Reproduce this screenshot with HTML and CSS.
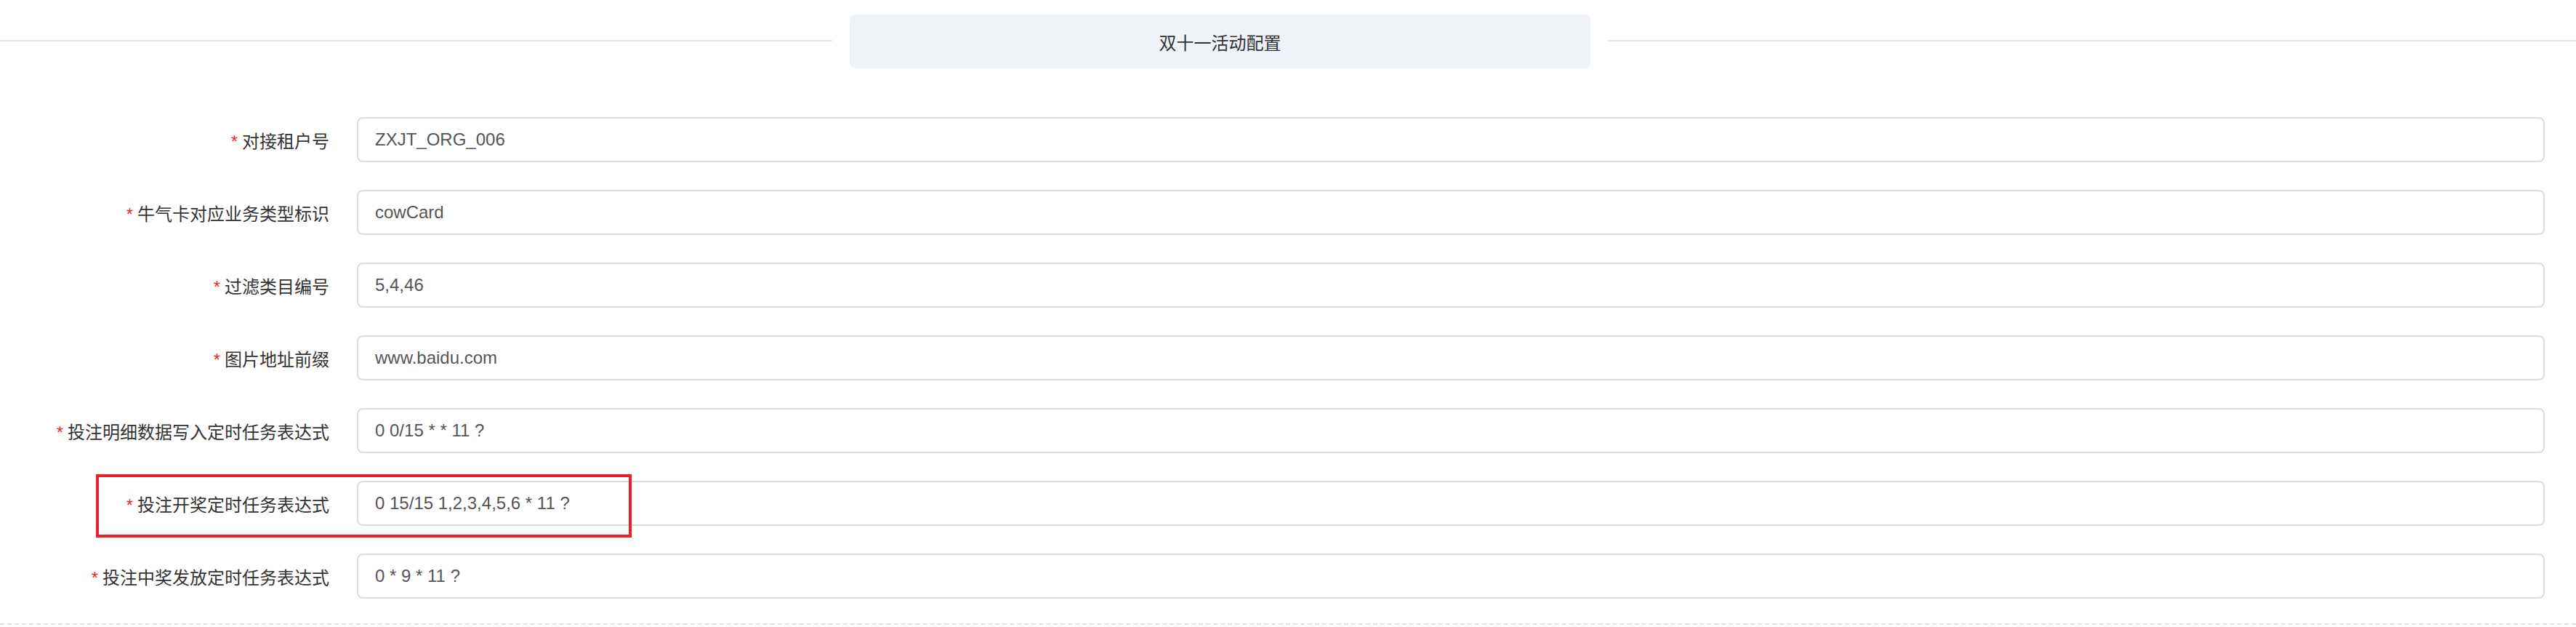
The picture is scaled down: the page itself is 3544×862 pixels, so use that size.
FILE: index.html
```html
<!DOCTYPE html>
<html lang="zh-CN">
<head>
<meta charset="utf-8">
<title>双十一活动配置</title>
<link rel="stylesheet" href="styles.css">
</head>
<body>
<div class="page">
  <div class="section-head">
    <div class="head-line"></div>
    <div class="head-title">双十一活动配置</div>
    <div class="head-line"></div>
  </div>
  <form class="form">
    <div class="row">
      <label class="label"><span class="req">*</span>对接租户号</label>
      <div class="input">ZXJT_ORG_006</div>
    </div>
    <div class="row">
      <label class="label"><span class="req">*</span>牛气卡对应业务类型标识</label>
      <div class="input">cowCard</div>
    </div>
    <div class="row">
      <label class="label"><span class="req">*</span>过滤类目编号</label>
      <div class="input">5,4,46</div>
    </div>
    <div class="row">
      <label class="label"><span class="req">*</span>图片地址前缀</label>
      <div class="input">www.baidu.com</div>
    </div>
    <div class="row">
      <label class="label"><span class="req">*</span>投注明细数据写入定时任务表达式</label>
      <div class="input">0 0/15 * * 11 ?</div>
    </div>
    <div class="row">
      <label class="label"><span class="req">*</span>投注开奖定时任务表达式</label>
      <div class="input">0 15/15 1,2,3,4,5,6 * 11 ?</div>
      <div class="highlight"></div>
    </div>
    <div class="row">
      <label class="label"><span class="req">*</span>投注中奖发放定时任务表达式</label>
      <div class="input">0 * 9 * 11 ?</div>
    </div>
  </form>
  <div class="dashed"></div>
</div>
</body>
</html>
```
FILE: styles.css
```css
html, body {
  margin: 0;
  padding: 0;
  background: #ffffff;
}
.page {
  font-family: "Liberation Sans", "Noto Sans CJK SC", sans-serif;
  font-size: 24px;
  color: #333333;
  padding-top: 20px;
}
.section-head {
  display: grid;
  grid-template-columns: 1145px 1019px 1fr;
  column-gap: 24px;
  align-items: center;
}
.head-line {
  height: 2px;
  background: #e4e4e4;
  margin-top: -3px;
}
.head-title {
  height: 74px;
  background: #eff2f7;
  border-radius: 8px;
  display: flex;
  align-items: center;
  justify-content: center;
  color: #333333;
  font-size: 24px;
}
.form {
  margin: 67px 0 0 0;
  display: flex;
  flex-direction: column;
  gap: 38px;
}
.row {
  position: relative;
  display: flex;
  align-items: center;
  column-gap: 38px;
  height: 62px;
  padding-right: 43px;
}
.label {
  width: 453px;
  flex: none;
  text-align: right;
  color: #333333;
  white-space: nowrap;
}
.req {
  color: #f52a2a;
  margin-right: 6px;
}
.input {
  flex: 1;
  height: 62px;
  box-sizing: border-box;
  border: 2px solid #dcdcdc;
  border-radius: 8px;
  padding: 0 23px;
  display: flex;
  align-items: center;
  color: #555555;
  white-space: nowrap;
}
.highlight {
  position: absolute;
  left: 132px;
  top: -9px;
  width: 737px;
  height: 87px;
  box-sizing: border-box;
  border: 4px solid #e8202a;
  pointer-events: none;
}
.dashed {
  margin-top: 34px;
  border-top: 2px dashed #e2e2e2;
}
```
